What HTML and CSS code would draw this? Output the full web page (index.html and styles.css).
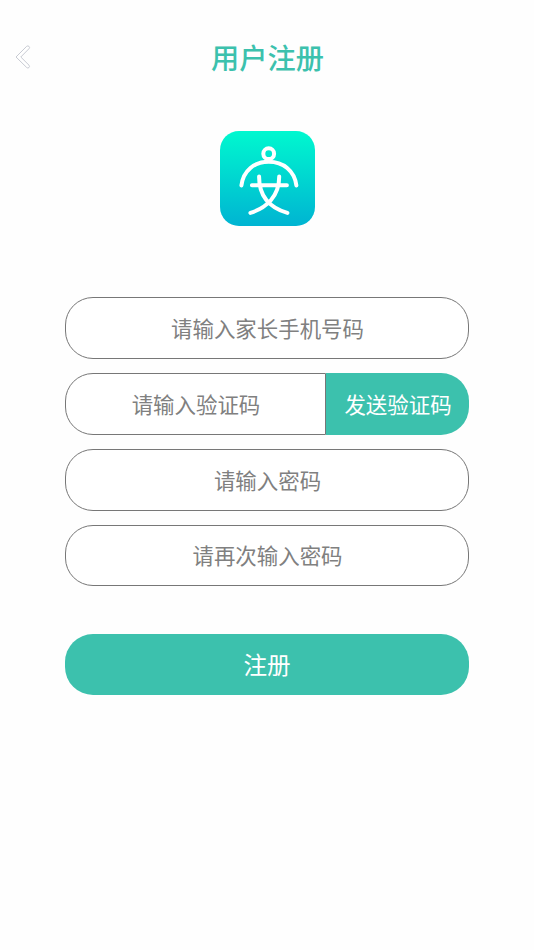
FILE: index.html
```html
<!DOCTYPE html>
<html lang="zh-CN">
<head>
<meta charset="utf-8">
<title>用户注册</title>
<link rel="stylesheet" href="styles.css">
</head>
<body>
<header class="header">
  <a class="back" aria-label="返回"><svg width="16" height="24" viewBox="0 0 16 24"><path d="M1 12 11.7 1.3Q12.8.4 14 1.4T14 3.7L5.8 12l8.2 8.2q1.1 1.2 0 2.3t-2.3 0Z"/></svg></a>
  <h1 class="title">用户注册</h1>
</header>
<svg class="logo" viewBox="0 0 95 95">
  <defs><linearGradient id="bg" x1="0" y1="0" x2="0" y2="1"><stop offset="0" stop-color="#00f8cf"/><stop offset="1" stop-color="#00b4d2"/></linearGradient></defs>
  <rect width="95" height="95" rx="19" fill="url(#bg)"/>
  <g class="logo-lines">
    <circle cx="49.3" cy="22.3" r="5.4"/>
    <path d="M22 54C24 39 35 30.3 49.3 30.3S75 39 77 54M32.5 53.8H67.5M39.7 45C39.5 65 51 76.5 68 81.5M59.8 45C60 65 47 76.5 31 81.5"/>
  </g>
</svg>
<form class="form">
  <input class="field" type="tel" placeholder="请输入家长手机号码">
  <div class="code-row">
    <input class="field code" type="text" placeholder="请输入验证码">
    <button class="send" type="button">发送验证码</button>
  </div>
  <input class="field" type="password" placeholder="请输入密码">
  <input class="field" type="password" placeholder="请再次输入密码">
  <button class="submit" type="button">注册</button>
</form>
</body>
</html>
```

FILE: styles.css
```css
* { box-sizing: border-box; }
body {
  margin: 0;
  background: #fefefe;
  font-family: "Noto Sans CJK SC", sans-serif;
}
input, button { font-family: inherit; margin: 0; }
.header {
  display: grid;
  grid-template-columns: 48px 1fr 48px;
  align-items: center;
  height: 114px;
}
.back { display: flex; padding-left: 15px; }
.back svg { fill: #fff; stroke: #c8cbd3; stroke-width: 1; }
.title {
  margin: 0;
  padding-left: 1px;
  text-align: center;
  color: #3cc1ad;
  font-size: 28.2px;
  font-weight: 500;
  line-height: 40px;
}
.logo {
  display: block;
  width: 95px;
  height: 95px;
  margin: 17.3px auto 0;
}
.logo-lines {
  fill: none;
  stroke: #fff;
  stroke-width: 4;
  stroke-linecap: round;
  transform: translate(-0.6px, 0.4px);
}
.form {
  display: flex;
  flex-direction: column;
  gap: 14.3px;
  width: 404px;
  margin: 71.2px auto 0;
}
.field {
  width: 100%;
  height: 61.5px;
  padding: 0 0 1.5px 1px;
  border: 1px solid #777;
  border-radius: 28px;
  background: #fff;
  color: #333;
  font-size: 21.45px;
  text-align: center;
}
.field::placeholder { color: #808080; opacity: 1; }
.code-row { display: flex; }
.code {
  flex: 1;
  min-width: 0;
  border-radius: 28px 0 0 28px;
}
.send {
  width: 143px;
  padding: 0 0 1px 1px;
  border: 0;
  border-radius: 0 28px 28px 0;
  background: #3cc1ad;
  color: #fff;
  font-size: 21.45px;
}
.submit {
  height: 61.5px;
  margin-top: 33px;
  padding: 0;
  border: 0;
  border-radius: 28px;
  background: #3cc1ad;
  color: #fff;
  font-size: 23.6px;
}
```
